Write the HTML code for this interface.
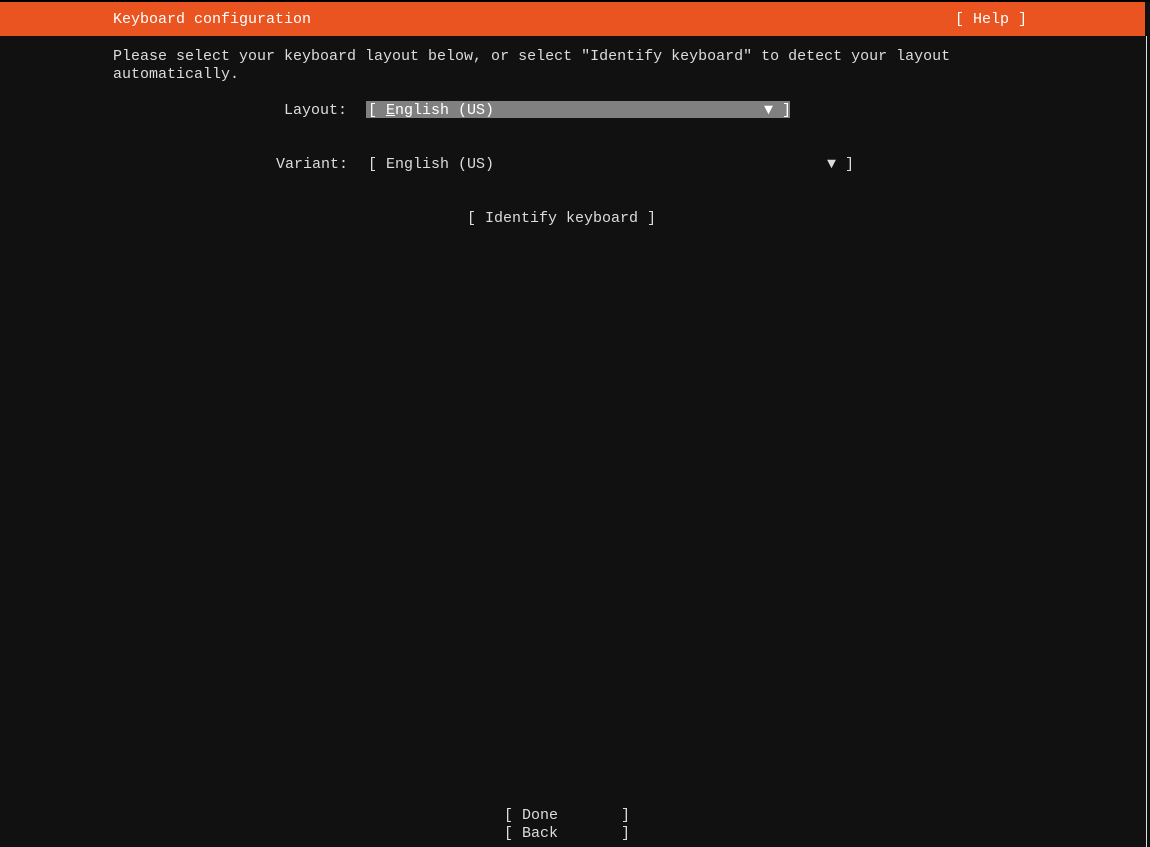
<!DOCTYPE html>
<html><head><style>
body{margin:0;width:1150px;height:847px;background:#111;overflow:hidden;position:relative;font-family:"Liberation Mono",monospace;font-size:15px;color:#dcdcdc}
.t{position:absolute;line-height:18px;white-space:pre}
#hdr{position:absolute;left:0;top:2px;width:1145px;height:34px;background:#e95420}
#top{position:absolute;left:0;top:0;width:1150px;height:2px;background:#000}
#rb{position:absolute;left:1146px;top:36px;width:1px;height:811px;background:#ddd}
#sel{position:absolute;left:366px;top:101px;width:424px;height:17px;background:#808080}
</style></head><body>
<div id="top"></div><div id="hdr"></div><div id="rb"></div>
<div class="t" style="left:113px;top:11px;color:#fff">Keyboard configuration</div>
<div class="t" style="left:955px;top:11px;color:#fff">[ Help ]</div>
<div class="t" style="left:113px;top:48px">Please select your keyboard layout below, or select "Identify keyboard" to detect your layout
automatically.</div>
<div id="sel"></div>
<div class="t" style="left:284px;top:102px">Layout:</div>
<div class="t" style="left:368px;top:102px;color:#fff">[ <u>E</u>nglish (US)</div>
<div class="t" style="left:764px;top:102px;color:#fff">▼ ]</div>
<div class="t" style="left:276px;top:156px">Variant:</div>
<div class="t" style="left:368px;top:156px">[ English (US)</div>
<div class="t" style="left:827px;top:156px">▼ ]</div>
<div class="t" style="left:467px;top:210px">[ Identify keyboard ]</div>
<div class="t" style="left:504px;top:807px">[ Done       ]
[ Back       ]</div>
</body></html>
